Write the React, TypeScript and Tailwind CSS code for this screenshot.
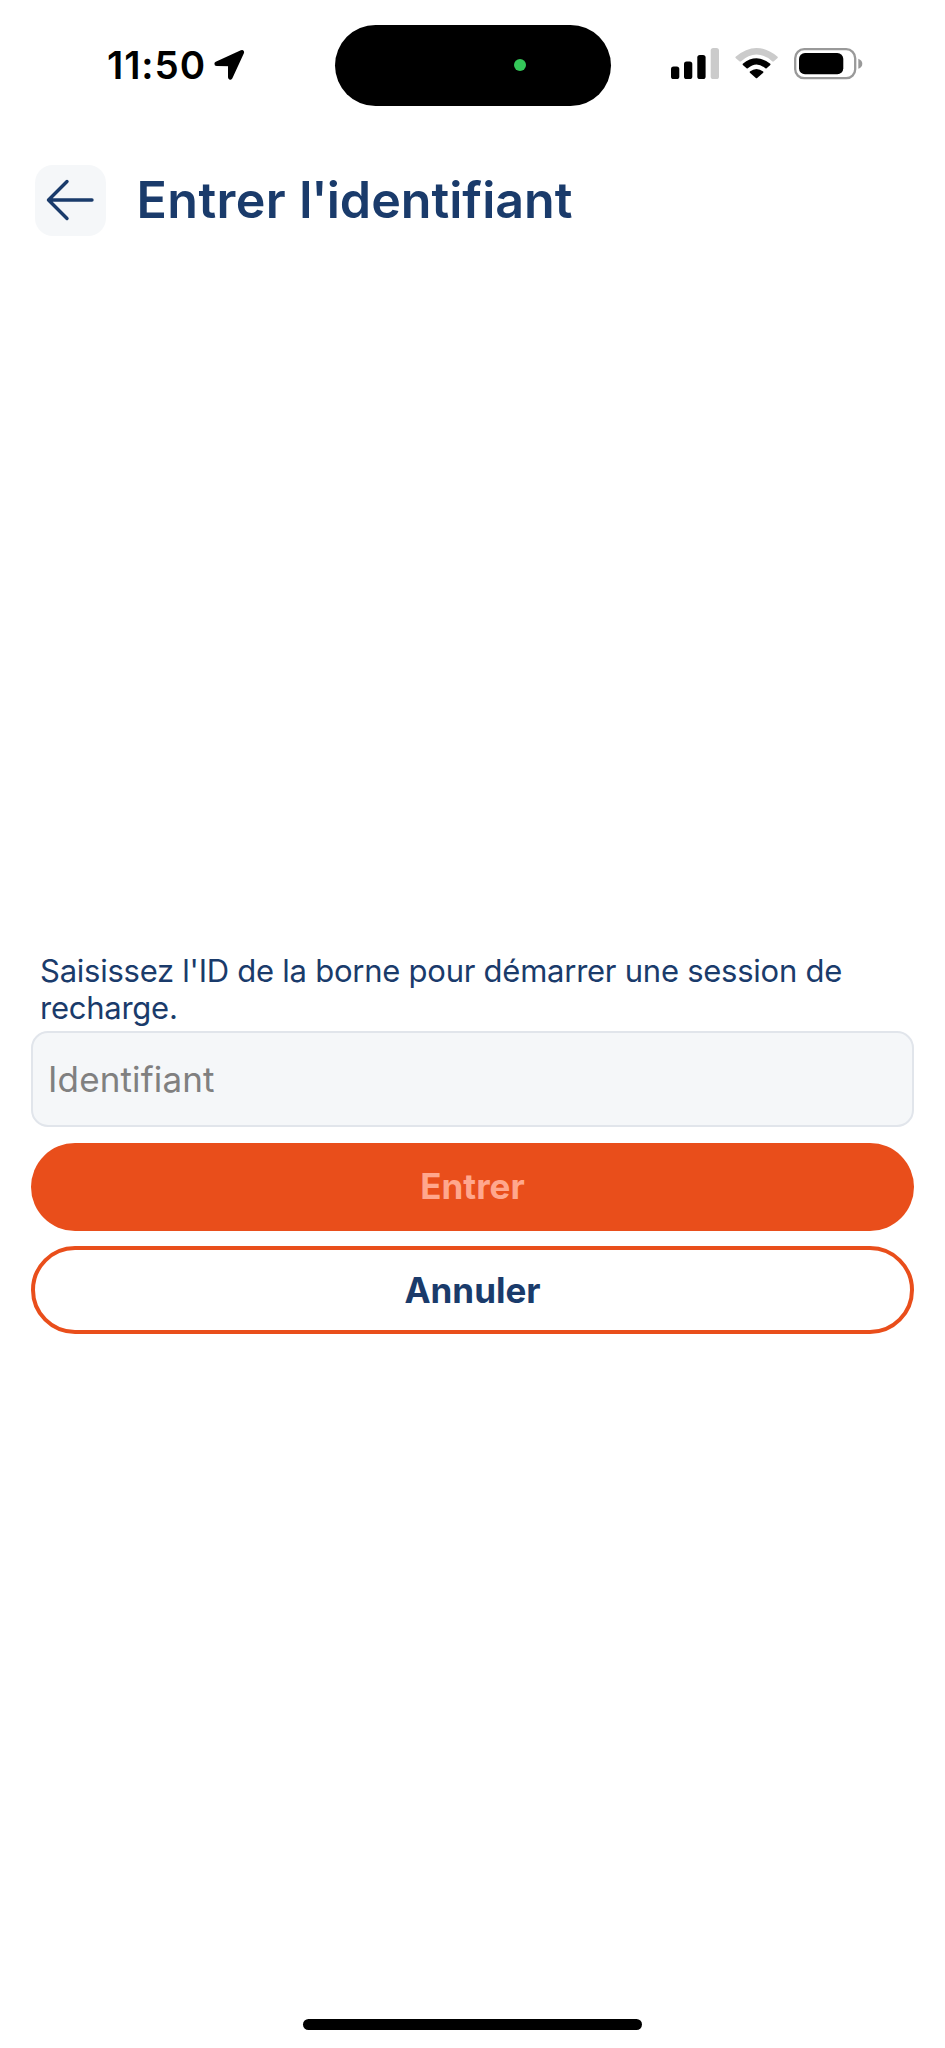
import React from "react";

const StatusBar = () => {
  return (
    <div className="flex h-[130px] text-black">
      <div className="flex w-[334.5px] items-start pl-[107px] pt-[42px]">
        <p className="w-[105px] whitespace-nowrap text-[38.5px]/[46px] font-semibold tracking-[0.9px]">
          11:50
        </p>
        <svg className="mt-[7px] h-[32px] w-[33px]" viewBox="0 0 33 32">
          <path
            d="M4.7 14.8 29.8 3.3 18.3 28.3V15Z"
            fill="currentColor"
            stroke="currentColor"
            strokeWidth="4.6"
            strokeLinejoin="round"
          />
        </svg>
      </div>
      <div className="mt-[24.5px] flex h-[81px] w-[276px] items-center rounded-full bg-black pl-[179px]">
        <span className="size-[12px] rounded-full bg-[#34c759]" />
      </div>
      <svg
        className="ml-[59.5px] mt-[46px] h-[36px] w-[194px]"
        viewBox="670 46 194 36"
      >
        <rect x="671" y="66.5" width="8.3" height="12.5" rx="2.6" />
        <rect x="684" y="61.5" width="8.3" height="17.5" rx="2.6" />
        <rect x="697.3" y="55" width="8.3" height="24" rx="2.6" />
        <rect x="710.7" y="48" width="8.3" height="31" rx="2.6" fill="#cbcbcb" />
        <path
          d="M735.6 56.8Q756.5 39.2 777.6 56.8Q778 57.4 777.6 58L773.6 61.4Q773 61.8 772.4 61.4Q756.5 47.6 740.8 61.4Q740.2 61.8 739.6 61.4L735.6 58Q735.2 57.4 735.6 56.8Z"
          fill="#cbcbcb"
        />
        <path d="M742.8 63.7Q756.5 53 770.3 63.7Q770.7 64.3 770.3 64.9L766.6 68.3Q766 68.7 765.4 68.3Q756.5 60.6 747.8 68.3Q747.2 68.7 746.6 68.3L742.8 64.9Q742.4 64.3 742.8 63.7Z" />
        <path d="M749.9 71.6Q756.5 66.6 763.2 71.6Q763.6 72.2 763.2 72.8L757.2 78Q756.5 78.6 755.8 78L749.9 72.8Q749.5 72.2 749.9 71.6Z" />
        <rect
          x="795.2"
          y="49.2"
          width="60"
          height="29"
          rx="9"
          fill="none"
          stroke="#999"
          strokeWidth="2.3"
        />
        <rect x="799" y="53" width="44.3" height="21.3" rx="6" />
        <path d="M858.3 58.7Q862.3 60.2 862.3 63.7T858.3 68.7Z" fill="#999" />
      </svg>
    </div>
  );
};

const Header = () => {
  return (
    <header className="flex items-center gap-[30.5px] pl-[35px] pt-[34.5px]">
      <button
        aria-label="Retour"
        className="flex size-[71px] items-center justify-center rounded-[18px] bg-[#f5f7f9]"
      >
        <svg
          className="h-[42px] w-[49px]"
          viewBox="0 0 49 42"
          fill="none"
          stroke="currentColor"
          strokeWidth="3.4"
          strokeLinecap="round"
          strokeLinejoin="round"
        >
          <path d="M46 21H2.5M21 2.5 2.5 21 21 39.5" />
        </svg>
      </button>
      <h1 className="whitespace-nowrap text-[50.2px]/[60px] font-semibold">
        <span className="tracking-[0.4px]">Entrer </span>
        <span className="tracking-[-1px]">l'</span>identifiant
      </h1>
    </header>
  );
};

const App = () => {
  return (
    <div className="flex h-[2048px] w-[945px] flex-col bg-white font-['Inter','Liberation_Sans',sans-serif] text-[#1a3b6b]">
      <StatusBar />
      <Header />
      <main className="mt-[716px] flex flex-col px-[31px]">
        <p className="px-[9px] text-[31px]/[37.5px] tracking-[-0.25px]">
          Saisissez l'ID de la borne pour démarrer une session de recharge.
        </p>
        <input
          placeholder="Identifiant"
          className="mt-[4px] h-[96px] w-full rounded-[17px] border-2 border-[#e1e5eb] bg-[#f5f7f9] px-[15px] text-[35px] tracking-[0.15px] placeholder:text-[#808080]"
        />
        <button className="mt-[16px] h-[88px] rounded-full bg-[#e94e1b] text-[35px] font-bold text-[#ffa78d]">
          Entrer
        </button>
        <button className="mt-[15.5px] h-[88px] rounded-full border-4 border-[#e94e1b] text-[35px] font-bold">
          Annuler
        </button>
      </main>
      <div className="mx-auto mb-[18px] mt-auto h-[11px] w-[339px] rounded-full bg-black" />
    </div>
  );
};

export default App;
